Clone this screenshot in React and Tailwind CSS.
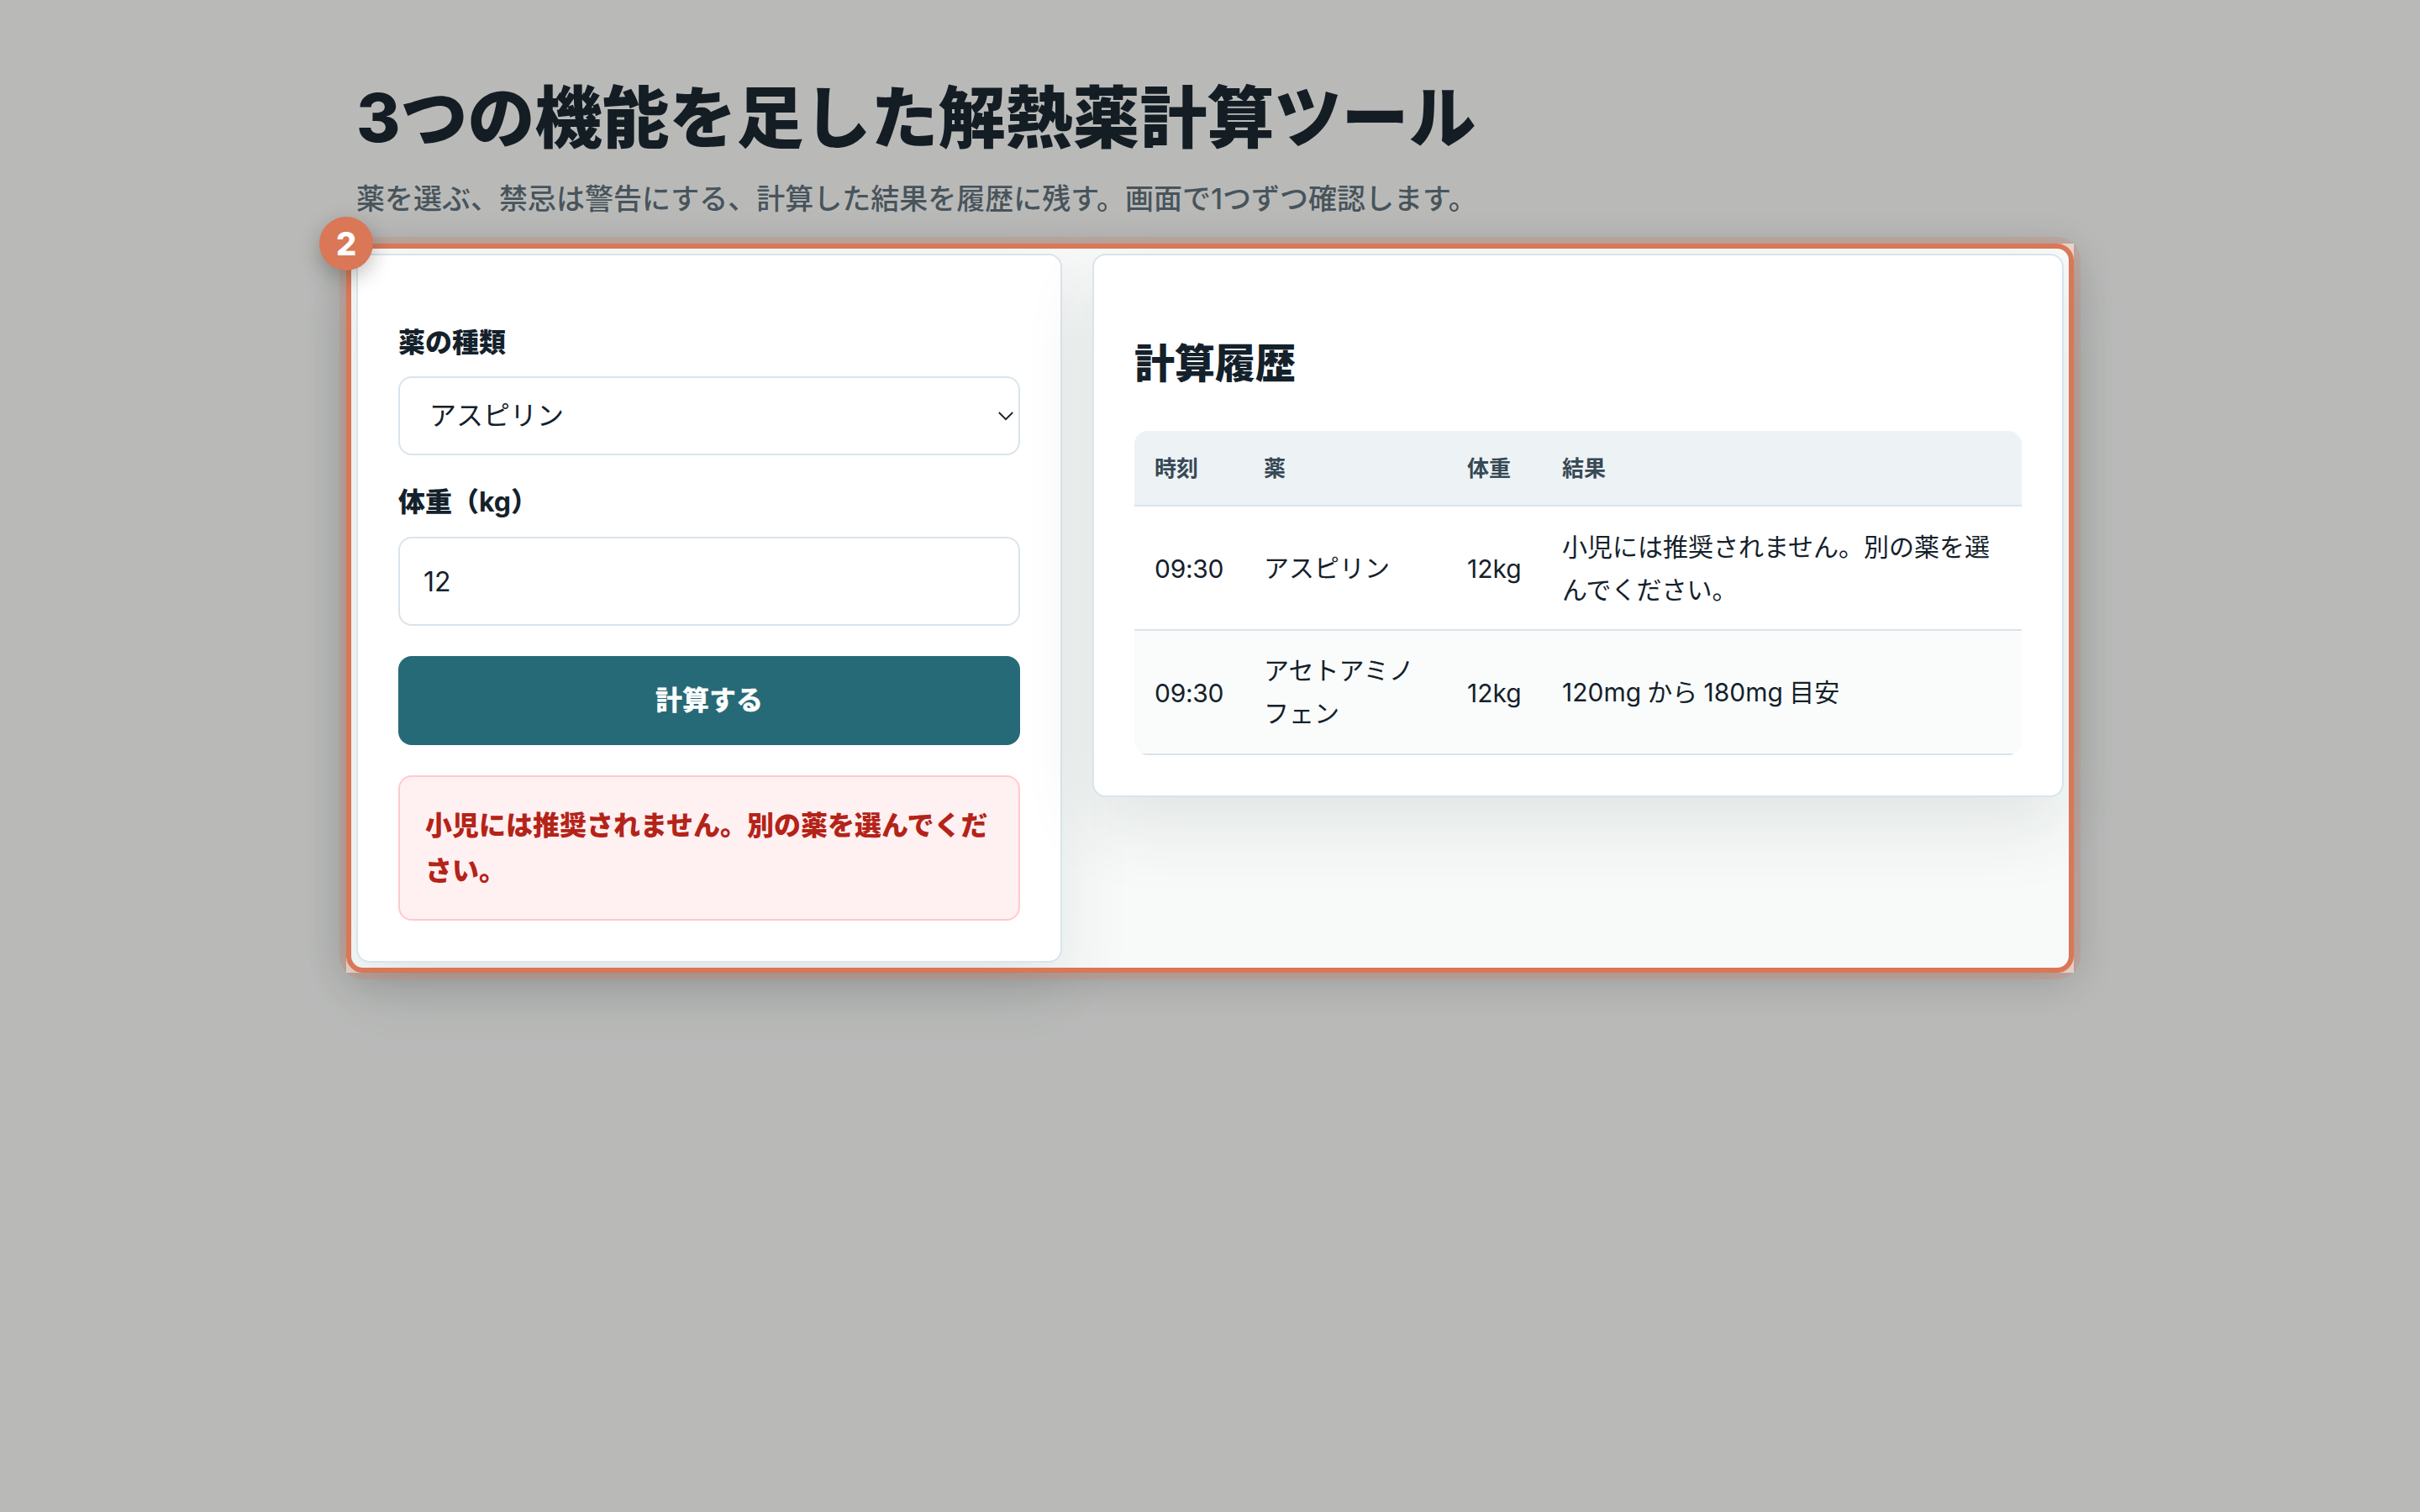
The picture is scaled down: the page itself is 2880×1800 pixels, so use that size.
import React, { useState } from "react";

const drugs = ["アスピリン", "アセトアミノフェン", "イブプロフェン"];

const history = [
    {
        time: "09:30",
        drug: "アスピリン",
        weight: "12kg",
        result: "小児には推奨されません。別の薬を選んでください。",
    },
    {
        time: "09:30",
        drug: "アセトアミノフェン",
        weight: "12kg",
        result: "120mg から 180mg 目安",
    },
];

const Card = ({ className, children }) => (
    <section
        className={`rounded-[16px] border-2 border-[#d9e4eb] bg-white p-12 shadow-[0_36px_84px_rgba(22,45,52,0.1)] ${className}`}
    >
        {children}
    </section>
);

const DoseForm = () => {
    const [drug, setDrug] = useState(drugs[0]);
    const [weight, setWeight] = useState("12");

    return (
        <Card className="w-[840px]">
            <label className="mt-7 block pt-px font-black leading-[53px]">薬の種類</label>
            <div className="relative mt-3.5">
                <select
                    value={drug}
                    onChange={(e) => setDrug(e.target.value)}
                    className="block h-[94px] w-full appearance-none rounded-[16px] border-2 border-[#d9e4eb] bg-white pl-[35px]"
                >
                    {drugs.map((name) => (
                        <option key={name}>{name}</option>
                    ))}
                </select>
                <svg
                    className="pointer-events-none absolute right-[7px] top-[41px] h-3 w-5"
                    viewBox="0 0 20 12"
                    fill="none"
                    stroke="#14212b"
                    strokeWidth="1.8"
                >
                    <path d="M1.8 2L10 10.2L18.2 2" />
                </svg>
            </div>

            <label className="mt-7 block pt-px font-black leading-[53px]">
                体重（<span className="font-bold">kg</span>）
            </label>
            <input
                value={weight}
                onChange={(e) => setWeight(e.target.value)}
                className="mt-[15px] block h-[106px] w-full rounded-[16px] border-2 border-[#d9e4eb] bg-white px-7"
            />

            <button className="mt-9 block h-[106px] w-full rounded-[16px] bg-[#276a77] font-black text-white">
                計算する
            </button>

            <div className="mt-9 h-[173px] rounded-[16px] border-2 border-[#ffc9cf] bg-[#fff0f1] px-[30px] pt-[31px] font-black leading-[54.4px] text-[#b42318]">
                小児には推奨されません。別の薬を選んでください。
            </div>
        </Card>
    );
};

const HistoryTable = () => (
    <Card className="w-[1156px]">
        <h2 className="mt-[45px] text-5xl font-black leading-[72px]">計算履歴</h2>
        <div className="mt-11 overflow-hidden rounded-[16px]">
            <table className="w-full table-fixed border-separate border-spacing-0 text-left text-[30px] leading-[51px]">
                <colgroup>
                    <col className="w-[130px]" />
                    <col className="w-[242px]" />
                    <col className="w-[113px]" />
                    <col />
                </colgroup>
                <thead>
                    <tr className="h-[90px] bg-[#edf2f5] text-[26px] leading-[44px] text-[#374955]">
                        {["時刻", "薬", "体重", "結果"].map((title) => (
                            <th
                                key={title}
                                className="whitespace-nowrap border-b-2 border-[#d9e4eb] pl-6 pt-0.5 font-bold"
                            >
                                {title}
                            </th>
                        ))}
                    </tr>
                </thead>
                <tbody>
                    {history.map((row) => (
                        <tr key={row.drug} className="h-[148px] even:bg-[#fafcfb]">
                            <td className="border-b-2 border-[#d9e4eb] pl-6 pt-0.5 tracking-[-0.3px]">{row.time}</td>
                            <td className="border-b-2 border-[#d9e4eb] px-6">{row.drug}</td>
                            <td className="whitespace-nowrap border-b-2 border-[#d9e4eb] pl-6 pt-0.5">{row.weight}</td>
                            <td className="border-b-2 border-[#d9e4eb] px-6 pt-px [word-spacing:-1.2px]">{row.result}</td>
                        </tr>
                    ))}
                </tbody>
            </table>
        </div>
    </Card>
);

// Dims the page around the cards and marks them with a numbered frame
const Spotlight = () => (
    <div className="pointer-events-none absolute -inset-3 shadow-[0_0_0_3000px_rgba(20,20,19,0.28)]">
        <div className="absolute inset-0 rounded-[20px] border-[6px] border-[#d97757] shadow-[0_0_0_8px_rgba(217,119,87,0.22),0_8px_48px_rgba(20,20,19,0.2)]" />
        <div className="absolute -left-8 -top-8 flex size-16 items-center justify-center rounded-full bg-[#d97757] text-[38px] font-extrabold leading-none text-white shadow-[0_8px_24px_rgba(20,20,19,0.28)]">
            2
        </div>
    </div>
);

const App = () => (
    <div
        lang="ja"
        className="h-[1800px] w-[2880px] overflow-hidden bg-[#f8faf9] font-['Inter','Noto_Sans_CJK_JP',sans-serif] text-[32px] text-[#14212b]"
    >
        <main className="mx-auto w-[2032px] pt-[92px]">
            <h1 className="text-[80px] font-extrabold leading-[96px]">3つの機能を足した解熱薬計算ツール</h1>
            <p className="mt-5 text-[34px] font-medium leading-[58px] text-[#5c6c78]">
                薬を選ぶ、禁忌は警告にする、計算した結果を履歴に残す。画面で1つずつ確認します。
            </p>
            <div className="relative mt-9 flex items-start gap-9">
                <DoseForm />
                <HistoryTable />
                <Spotlight />
            </div>
        </main>
    </div>
);

export default App;
